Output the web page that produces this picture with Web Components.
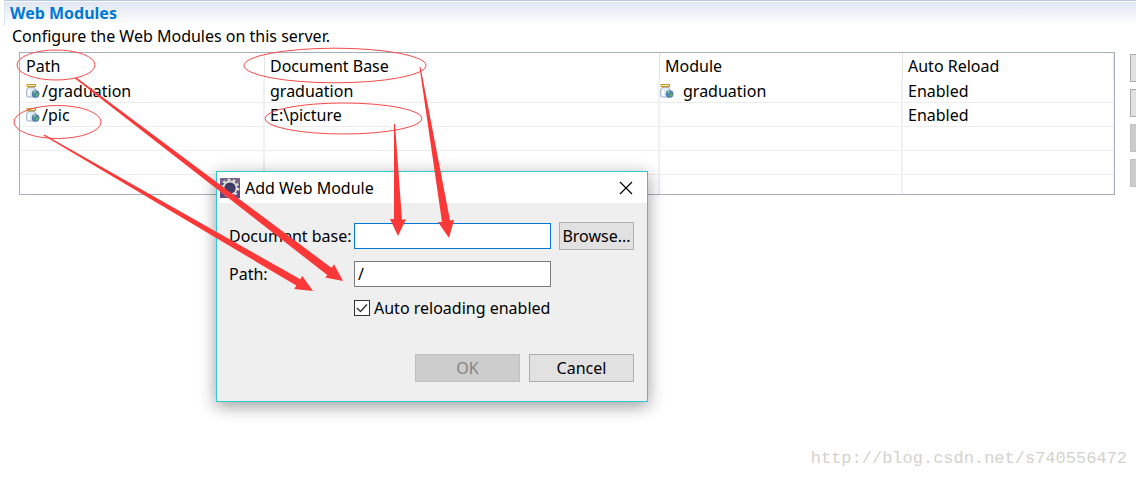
<!DOCTYPE html>
<html lang="en">
<head>
<meta charset="utf-8">
<title>Web Modules</title>
<style>
  body { margin: 0; background: #fff; color: #000; font: 16px/20px "Noto Sans", "Open Sans", sans-serif; }
</style>
</head>
<body>
<server-editor></server-editor>

<script>
const define = (name, html, init) => customElements.define(name, class extends HTMLElement {
  constructor() {
    super();
    const t = document.createElement('template');
    t.innerHTML = html;
    this.attachShadow({ mode: 'open' }).append(t.content.cloneNode(true));
  }
  connectedCallback() { if (init) init(this, this.shadowRoot); }
});

define('jar-icon', `
<style>:host { display: inline-block; width: 14px; height: 16px; } svg { display: block; }</style>
<svg width="14" height="16" viewBox="0 0 14 16" aria-hidden="true">
  <path d="M2.200 4.500.6 7v5.600q0 1.400 1.400 1.400h6.600q1.400 0 1.400-1.400V7L8.400 4.500z" fill="#dfebf8" stroke="#a3b5cc"/>
  <path d="M3 7v5.500" stroke="#fff" stroke-width="2"/>
  <path d="M2.500 3.500v1.500M8 3.500v1.500" stroke="#c39a30"/>
  <rect x="1" y="1.500" width="8.500" height="2" fill="#f8e9b8" stroke="#c39a30"/>
  <circle cx="9.600" cy="11" r="3.600" fill="#4b86b8" stroke="#3c6c92" stroke-width=".6"/>
  <path d="M7.100 9.500q1.500-2.200 3.200-1.400L9.100 10.300l-1.800.6zM10.100 11l2.400-.8q.8 2.100-1.500 3.600l-1.700-1z" fill="#6fae55"/>
  <path d="M8.100 9.100l1.400-.6" stroke="#d6edf2"/>
</svg>`);

define('eclipse-icon', `
<style>:host { display: block; width: 20px; height: 20px; } svg { display: block; }</style>
<svg width="20" height="20" viewBox="0 0 20 20" aria-hidden="true">
  <rect width="20" height="20" fill="#5d4a80"/>
  <path d="M0 0h20v5H0z" fill="#77658c"/>
  <circle cx="10" cy="10" r="8.200" fill="none" stroke="#e4dfd6" stroke-width="2.400" stroke-dasharray="2.500 2.650"/>
  <circle cx="10" cy="10" r="6.600" fill="#3b3560" stroke="#dcd8d0" stroke-width="2"/>
  <path d="M5 8h10M4.500 10.500h11M5 13h10" stroke="#4d4773"/>
</svg>`);

define('push-button', `
<style>
  :host { display: block; height: 28px; }
  button { box-sizing: border-box; width: 100%; height: 100%; padding: 0; border: 1px solid #adadad; border-radius: 0; background: #e1e1e1; color: #000; font: inherit; white-space: nowrap; }
  button:disabled { background: #ccc; border-color: #bfbfbf; color: #838383; }
</style>
<button type="button"><slot></slot></button>`,
(el, root) => {
  const b = root.querySelector('button');
  b.disabled = el.hasAttribute('disabled');
  if (el.hasAttribute('label')) b.setAttribute('aria-label', el.getAttribute('label'));
});

define('module-table', `
<style>
  :host { display: block; border: 1px solid #a5afbd; }
  table { width: 100%; table-layout: fixed; border-collapse: separate; border-spacing: 0; }
  th, td { box-sizing: border-box; height: 24px; padding: 0 5px; border-right: 2px solid #eef0f5; border-bottom: 1px solid #ededed; text-align: left; font-weight: normal; white-space: nowrap; }
  th { height: 26px; border-right: 1px solid #e5e5e5; border-bottom: 0; }
  tr > :first-child { padding-left: 6px; }
  tr > :last-child { border-right-width: 1px; }
  tr:last-child td { height: 19px; border-bottom: 0; }
  .path { width: 245px; }
  .base { width: 395px; }
  .module { width: 243px; }
  .item { display: flex; align-items: center; gap: 2px; }
  .wide { gap: 9px; margin-left: -5px; }
</style>
<table>
  <thead><tr><th class="path">Path</th><th class="base">Document Base</th><th class="module">Module</th><th>Auto Reload</th></tr></thead>
  <tbody>
    <tr><td><span class="item"><jar-icon></jar-icon><span>/graduation</span></span></td><td>graduation</td><td><span class="item wide"><jar-icon></jar-icon><span>graduation</span></span></td><td>Enabled</td></tr>
    <tr><td><span class="item"><jar-icon></jar-icon><span>/pic</span></span></td><td>E:\\picture</td><td></td><td>Enabled</td></tr>
    <tr><td></td><td></td><td></td><td></td></tr>
    <tr><td></td><td></td><td></td><td></td></tr>
    <tr><td></td><td></td><td></td><td></td></tr>
  </tbody>
</table>`);

define('add-module-dialog', `
<style>
  :host { display: block; box-sizing: border-box; width: 432px; border: 1px solid #2fc8d3; background: #efefef; box-shadow: 0 4px 16px rgba(0,0,0,.4); }
  header { display: flex; align-items: center; gap: 5px; height: 31px; padding: 0 11px 0 3px; background: #fff; }
  h2 { flex: 1; margin: 0; font: inherit; }
  .close { display: grid; place-items: center; width: 20px; height: 20px; padding: 0; border: 0; background: none; }
  form { padding: 19px 13px 19px 12px; }
  .grid { display: grid; grid-template-columns: 117px 1fr 75px; column-gap: 8px; row-gap: 11px; align-items: center; }
  label { white-space: nowrap; }
  input[type=text] { box-sizing: border-box; width: 100%; height: 26px; margin: 0; padding: 0 3px; border: 1px solid #7a7a7a; border-radius: 0; background: #fff; color: #000; font: inherit; outline: 0; }
  #base { border-color: #0078d7; }
  .check { grid-column: 2 / 4; display: flex; align-items: center; gap: 4px; }
  .tick { display: grid; }
  .tick > * { grid-area: 1 / 1; }
  .tick svg { pointer-events: none; }
  input[type=checkbox] { appearance: none; box-sizing: border-box; width: 16px; height: 16px; margin: 0; border: 1px solid #333; background: #fff; }
  input:not(:checked) + svg { visibility: hidden; }
  footer { display: flex; justify-content: flex-end; gap: 9px; margin-top: 36px; }
  footer push-button { width: 105px; }
</style>
<header>
  <eclipse-icon></eclipse-icon><h2>Add Web Module</h2>
  <button class="close" type="button" aria-label="Close"><svg width="14" height="14" viewBox="0 0 14 14"><path d="M1 1l12 12M13 1L1 13" stroke="#000" stroke-width="1.2"/></svg></button>
</header>
<form>
  <div class="grid">
    <label for="base">Document base:</label><input id="base" type="text"><push-button>Browse...</push-button>
    <label for="path">Path:</label><input id="path" type="text" value="/"><span></span>
    <span></span><div class="check"><span class="tick"><input id="reload" type="checkbox" checked><svg width="16" height="16" viewBox="0 0 16 16"><path d="M3 8l3.5 3.5L13 4.5" fill="none" stroke="#333" stroke-width="1.4"/></svg></span><label for="reload">Auto reloading enabled</label></div>
  </div>
  <footer><push-button disabled>OK</push-button><push-button>Cancel</push-button></footer>
</form>`);

define('red-marks', `
<style>:host { display: block; pointer-events: none; } svg { display: block; }</style>
<svg width="480" height="310" viewBox="0 0 480 310" aria-hidden="true">
  <g fill="none" stroke="#f64a4a">
    <ellipse cx="56" cy="65" rx="39" ry="15"/>
    <ellipse cx="335" cy="65.5" rx="91" ry="17.3"/>
    <ellipse cx="57.5" cy="122" rx="43.5" ry="16.5"/>
    <ellipse cx="343.5" cy="118.5" rx="78.5" ry="15.5"/>
  </g>
  <g fill="#fb3838">
    <path d="M75 78.500 76 77.300 331.700 268 334 264.300 343 281 325.300 277.500 327.300 275z"/>
    <path d="M43.600 135.600 44.300 134.500 300.300 279.300 302.300 276 313 291 294.300 289 296.300 285.500z"/>
    <path d="M394 124h1L402 220l4-1-8 17-8-17h4z"/>
    <path d="M419.500 67h1L450 220.500l4-.5-5 18-11-16h4z"/>
  </g>
</svg>`);

define('server-editor', `
<style>
  :host { display: block; position: relative; min-height: 100vh; overflow: hidden; }
  section { margin-left: 4px; }
  .bar { border-top: 1px solid #b5c8de; border-left: 1px solid #dde5f0; height: 25px; padding-left: 5px; background: linear-gradient(#fff 1px, #e0e6f2 1px, #fff 24px); }
  h1 { margin: 0; font: bold 16px/24px "Noto Sans", "Open Sans", sans-serif; color: #0078d7; }
  p { margin: 0 0 6px 8px; }
  .body { display: flex; align-items: flex-start; gap: 15px; margin: 0 -84px 0 15px; }
  module-table { flex: 1; min-width: 0; }
  .actions { display: grid; gap: 7px; width: 90px; padding-top: 2px; }
  add-module-dialog { position: absolute; left: 216px; top: 171px; }
  red-marks { position: absolute; left: 0; top: 0; }
  .mark { position: absolute; right: 9px; bottom: 8px; color: #d3d3cc; font: 17px/22px "Liberation Mono", monospace; }
</style>
<section>
  <div class="bar"><h1>Web Modules</h1></div>
  <p>Configure the Web Modules on this server.</p>
  <div class="body">
    <module-table></module-table>
    <div class="actions">
      <push-button label="Add module"></push-button>
      <push-button label="Add external module"></push-button>
      <push-button label="Edit" disabled></push-button>
      <push-button label="Remove" disabled></push-button>
    </div>
  </div>
</section>
<add-module-dialog></add-module-dialog>
<red-marks></red-marks>
<span class="mark">http://blog.csdn.net/s740556472</span>`);
</script>
</body>
</html>
